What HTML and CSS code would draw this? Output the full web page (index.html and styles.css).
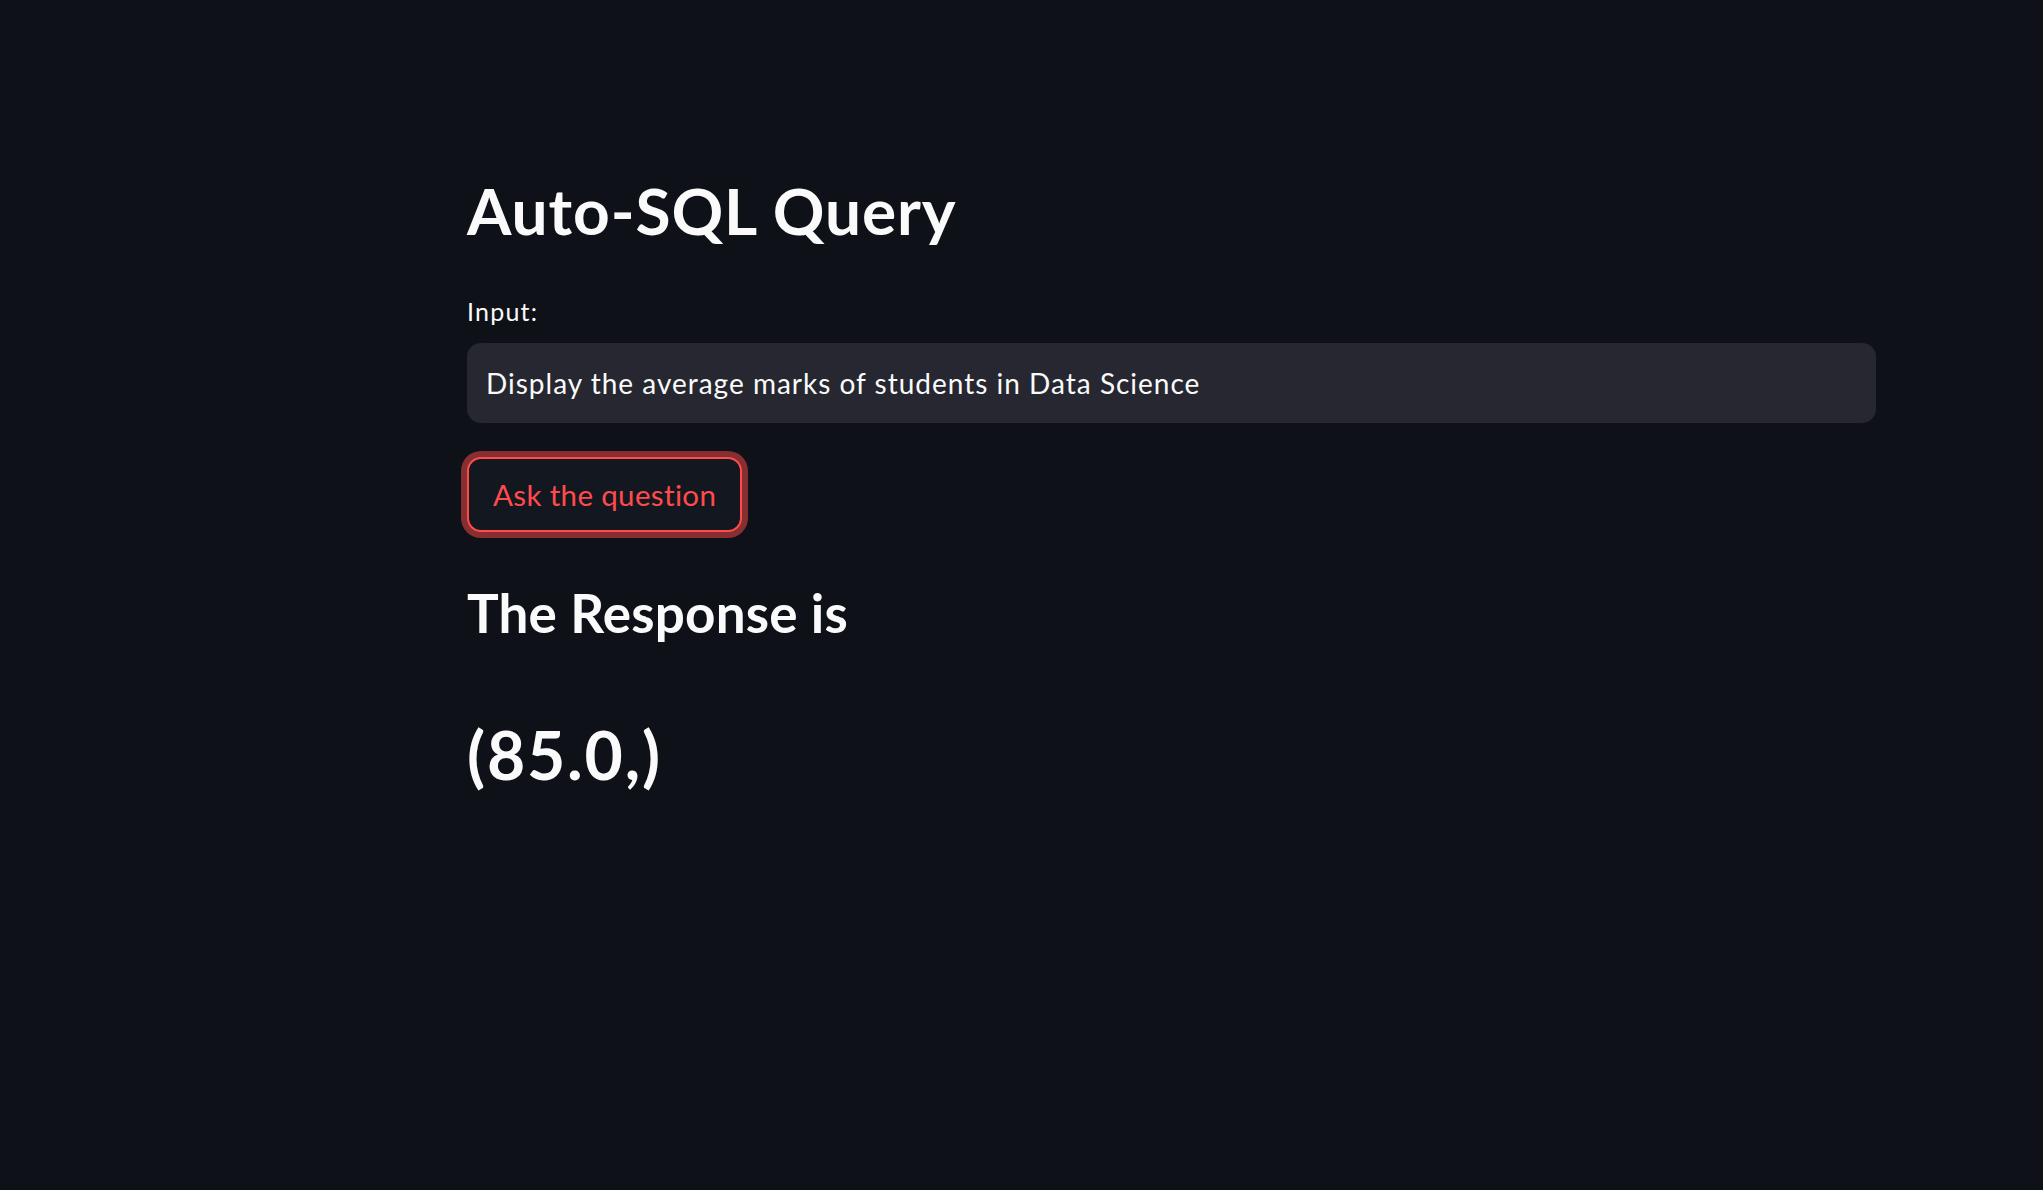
FILE: index.html
```html
<!DOCTYPE html>
<html>
<head>
<meta charset="utf-8">
<title>Auto-SQL Query</title>
<link rel="stylesheet" href="styles.css">
</head>
<body>
<main class="app">
  <section class="block">
    <h1 class="title">Auto-SQL Query</h1>
    <label class="label" for="q">Input:</label>
    <div class="input-box">
      <input id="q" class="input" type="text" value="Display the average marks of students in Data Science">
    </div>
    <div class="btn-row">
      <button class="btn" type="button">Ask the question</button>
    </div>
    <h2 class="subhead">The Response is</h2>
    <h1 class="result">(85.0,)</h1>
  </section>
</main>
</body>
</html>
```

FILE: styles.css
```css
html, body {
  margin: 0;
  padding: 0;
  background: #0e1117;
  height: 100%;
}
body {
  font-family: Lato, "Noto Sans", sans-serif;
  color: #fafafa;
}
.app {
  display: flex;
  justify-content: flex-start;
  padding-left: 467px;
  padding-top: 171px;
}
.block {
  width: 1409px;
  display: flex;
  flex-direction: column;
  align-items: flex-start;
}
.title {
  margin: 0;
  font-size: 64px;
  line-height: 80px;
  font-weight: 700;
  letter-spacing: 0.9px;
}
.label {
  margin-top: 43px;
  font-size: 25px;
  line-height: 34px;
  font-weight: 400;
  letter-spacing: 1.2px;
}
.input-box {
  margin-top: 15px;
  width: 100%;
  height: 80px;
  background: #262730;
  border-radius: 14px;
  display: flex;
  align-items: center;
  box-sizing: border-box;
  padding: 0 19px;
}
.input {
  flex: 1;
  background: transparent;
  border: none;
  outline: none;
  color: #fafafa;
  font-family: inherit;
  font-size: 28px;
  letter-spacing: 1px;
  padding: 0;
}
.btn-row {
  margin-top: 34px;
  display: flex;
}
.btn {
  height: 75px;
  box-sizing: border-box;
  padding: 0 24px;
  background: #131720;
  border: 2px solid #ff4b4b;
  border-radius: 14px;
  box-shadow: 0 0 0 6px rgba(255, 75, 75, 0.5);
  color: #ff4b4b;
  font-family: inherit;
  font-size: 29.5px;
  letter-spacing: 0.35px;
  font-weight: 400;
}
.subhead {
  margin: 46px 0 0;
  font-size: 53px;
  line-height: 70px;
  font-weight: 700;
  letter-spacing: 0.2px;
}
.result {
  margin: 67px 0 0;
  font-size: 66px;
  line-height: 80px;
  font-weight: 700;
  letter-spacing: 1.8px;
}
```
